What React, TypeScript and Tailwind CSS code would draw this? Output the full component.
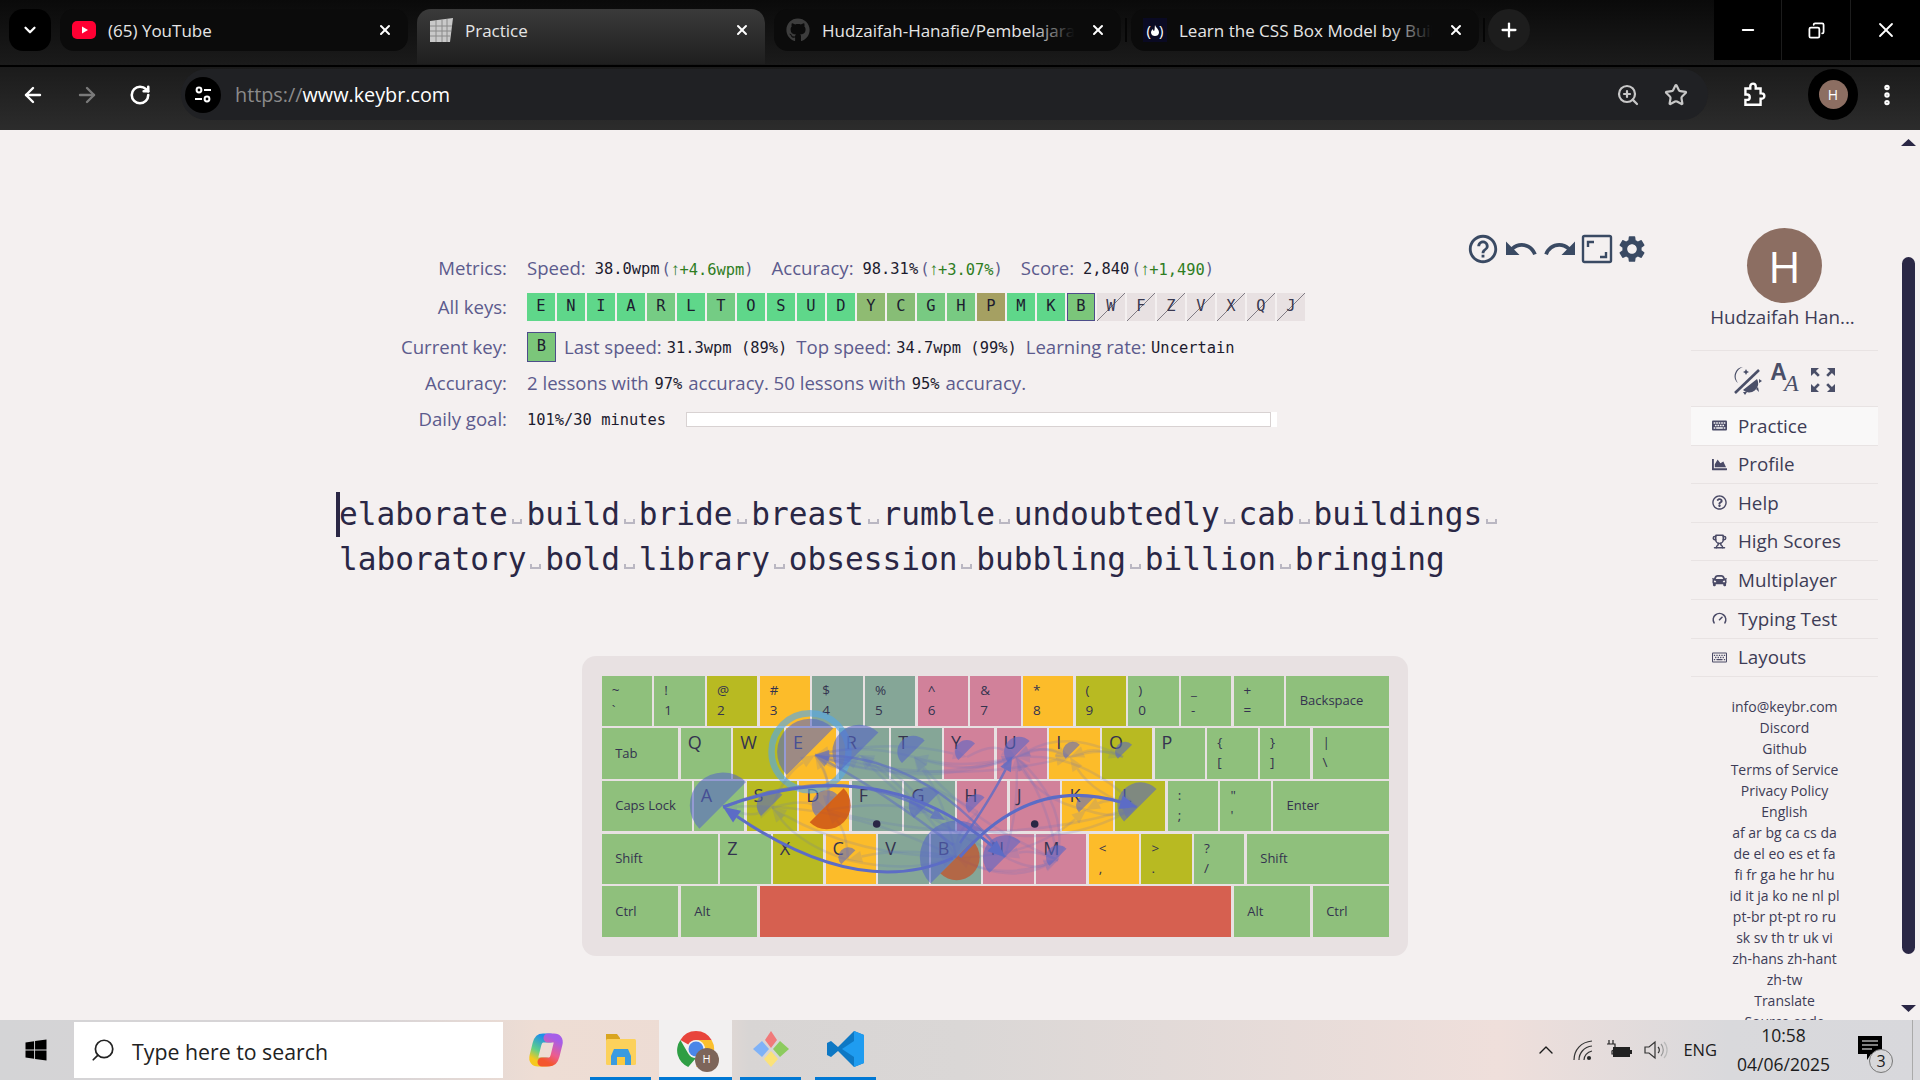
import { ChevronDown, ChevronUp, Gauge, Minus, MoreVertical, Plus, RotateCw, ArrowLeft, ArrowRight, Star, Trophy, X, ZoomIn, Search, Copy } from "lucide-react";
import { FaChartArea, FaGithub, FaKeyboard, FaRegKeyboard, FaRegQuestionCircle, FaCar, FaWindows } from "react-icons/fa";
import { MdRedo, MdSettings, MdUndo, MdZoomOutMap, MdHelpOutline } from "react-icons/md";

const sans = "font-['Open_Sans',sans-serif]";
const mono = "font-['DejaVu_Sans_Mono',monospace]";

const G = "bg-[#8fc07c]";
const O = "bg-[#b8ba22]";
const A = "bg-[#fcbc2a]";
const T = "bg-[#85a697]";
const P = "bg-[#d1819a]";

type Key = { top?: string; bot?: string; letter?: string; name?: string; w?: string; bg: string };

const U = "w-[50.33px]";

const rows: Key[][] = [
  [
    { top: "~", bot: "`", bg: G, w: U },
    { top: "!", bot: "1", bg: G, w: U },
    { top: "@", bot: "2", bg: O, w: U },
    { top: "#", bot: "3", bg: A, w: U },
    { top: "$", bot: "4", bg: T, w: U },
    { top: "%", bot: "5", bg: T, w: U },
    { top: "^", bot: "6", bg: P, w: U },
    { top: "&", bot: "7", bg: P, w: U },
    { top: "*", bot: "8", bg: A, w: U },
    { top: "(", bot: "9", bg: O, w: U },
    { top: ")", bot: "0", bg: G, w: U },
    { top: "_", bot: "-", bg: G, w: U },
    { top: "+", bot: "=", bg: G, w: U },
    { name: "Backspace", bg: G, w: "w-[103px]" },
  ],
  [
    { name: "Tab", bg: G, w: "w-[76.67px]" },
    { letter: "Q", bg: G, w: U },
    { letter: "W", bg: O, w: U },
    { letter: "E", bg: A, w: U },
    { letter: "R", bg: T, w: U },
    { letter: "T", bg: T, w: U },
    { letter: "Y", bg: P, w: U },
    { letter: "U", bg: P, w: U },
    { letter: "I", bg: A, w: U },
    { letter: "O", bg: O, w: U },
    { letter: "P", bg: G, w: U },
    { top: "{", bot: "[", bg: G, w: U },
    { top: "}", bot: "]", bg: G, w: U },
    { top: "|", bot: "\\", bg: G, w: "w-[76.67px]" },
  ],
  [
    { name: "Caps Lock", bg: G, w: "w-[89.83px]" },
    { letter: "A", bg: G, w: U },
    { letter: "S", bg: O, w: U },
    { letter: "D", bg: A, w: U },
    { letter: "F", bg: T, w: U },
    { letter: "G", bg: T, w: U },
    { letter: "H", bg: P, w: U },
    { letter: "J", bg: P, w: U },
    { letter: "K", bg: A, w: U },
    { letter: "L", bg: O, w: U },
    { top: ":", bot: ";", bg: G, w: U },
    { top: '"', bot: "'", bg: G, w: U },
    { name: "Enter", bg: G, w: "w-[116.2px]" },
  ],
  [
    { name: "Shift", bg: G, w: "w-[116.2px]" },
    { letter: "Z", bg: G, w: U },
    { letter: "X", bg: O, w: U },
    { letter: "C", bg: A, w: U },
    { letter: "V", bg: T, w: U },
    { letter: "B", bg: T, w: U },
    { letter: "N", bg: P, w: U },
    { letter: "M", bg: P, w: U },
    { top: "<", bot: ",", bg: A, w: U },
    { top: ">", bot: ".", bg: O, w: U },
    { top: "?", bot: "/", bg: G, w: U },
    { name: "Shift", bg: G, w: "w-[142.5px]" },
  ],
  [
    { name: "Ctrl", bg: G, w: "w-[76.67px]" },
    { name: "Alt", bg: G, w: "w-[76.67px]" },
    { bg: "bg-[#d66050]", w: "w-[471.7px]" },
    { name: "Alt", bg: G, w: "w-[76.67px]" },
    { name: "Ctrl", bg: G, w: "w-[76.67px]" },
  ],
];

function KeyCap({ k }: { k: Key }) {
  return (
    <div className={`${k.w} ${k.bg} h-[50.33px] shrink-0 text-[#34334f] ${sans}`}>
      {k.letter && <div className="pl-[7px] pt-[1px] text-[18px] leading-[26px]">{k.letter}</div>}
      {k.top && (
        <div className="pl-[10px] pt-[4px] text-[13.5px] leading-[20px]">
          <div>{k.top}</div>
          <div>{k.bot}</div>
        </div>
      )}
      {k.name && <div className="flex h-full items-center pl-[13.5px] text-[13px]">{k.name}</div>}
    </div>
  );
}

// fan charts and the finger-travel arrows sit on top of the keys
const R2 = 751.7;
const R3 = 805.3;
const R4 = 857.3;
const fans: [number, number, number][] = [
  [810, R2, 33], [859.3, R2, 27], [913.3, R2, 16], [966.7, R2, 11.7], [1019, R2, 15], [1072.7, R2, 10], [1125, R2, 10],
  [722.7, R3, 33], [771.7, R3, 15], [826.7, R3, 15], [926.7, R3, 18], [976.7, R3, 11], [1086, R3, 10], [1140.3, R3, 23],
  [848.3, R4, 10], [956.7, R4, 37], [1005, R4, 22], [1058, R4, 12],
];

const centers: Record<string, [number, number]> = {
  E: [815, 755], R: [860, 755], T: [914, 757], Y: [967, 757], U: [1016, 757], I: [1070, 757], O: [1123, 757],
  A: [723, 807], S: [772, 808], D: [827, 810], G: [930, 812], H: [978, 812], K: [1086, 810], L: [1137, 807],
  C: [848, 860], B: [956, 857], N: [1005, 857], M: [1058, 860],
};
const faint: [string, string, number][] = [
  ["S", "E", -12], ["D", "E", 10], ["C", "D", 10], ["C", "S", -14], ["B", "S", -25], ["B", "C", 12], ["C", "B", 14],
  ["B", "R", 14], ["B", "T", 12], ["G", "R", 12], ["N", "R", -18], ["M", "T", -20], ["H", "E", 18], ["R", "E", -8],
  ["E", "R", 20], ["T", "E", 12], ["E", "U", 34], ["U", "E", -30], ["T", "U", 18], ["U", "T", -12], ["E", "Y", -18],
  ["Y", "U", -14], ["U", "I", -12], ["I", "U", 12], ["I", "O", -8], ["O", "U", 28], ["O", "I", 10], ["K", "U", -20],
  ["L", "U", 28], ["L", "I", -16], ["L", "K", 12], ["B", "K", 26], ["K", "L", 10], ["D", "L", 44], ["G", "L", 50],
  ["M", "B", -22], ["B", "M", 26], ["N", "M", 12], ["M", "N", 10], ["E", "D", -10], ["S", "D", -10], ["D", "G", -10],
  ["A", "S", 10], ["B", "A", 30], ["N", "U", 8], ["M", "U", 12], ["U", "M", -28], ["H", "B", 10], ["E", "I", 30],
];

function Arrow({ x0, y0, cx, cy, x1, y1, op, w }: { x0: number; y0: number; cx: number; cy: number; x1: number; y1: number; op: number; w: number }) {
  const dx = x1 - cx;
  const dy = y1 - cy;
  const len = Math.hypot(dx, dy) || 1;
  const ux = dx / len;
  const uy = dy / len;
  const size = w > 2.6 ? 17 : 14;
  const bx = x1 - ux * size;
  const by = y1 - uy * size;
  const half = size * 0.42;
  return (
    <g opacity={op}>
      <path d={`M${x0} ${y0}Q${cx} ${cy} ${bx} ${by}`} fill="none" stroke="#5c6cc6" strokeWidth={w} />
      <polygon points={`${x1},${y1} ${bx - uy * half},${by + ux * half} ${bx + uy * half},${by - ux * half}`} fill="#5c6cc6" />
    </g>
  );
}

function KeyboardOverlay() {
  const half = (cx: number, cy: number, r: number, sweep: number) => {
    const d = r * 0.7071;
    return sweep
      ? `M${cx - d} ${cy + d}A${r} ${r} 0 0 1 ${cx + d} ${cy - d}Z`
      : `M${cx - d} ${cy + d}A${r} ${r} 0 0 0 ${cx + d} ${cy - d}Z`;
  };
  return (
    <svg className="absolute left-0 top-0 h-[300px] w-[826px]" viewBox="582 656 826 300">
      <circle cx="810" cy="751.7" r="38.5" fill="none" stroke="#58a8e4" strokeWidth="6.5" opacity="0.65" />
      {faint.map(([a, b, bend], i) => {
        const [x0, y0] = centers[a];
        const [x1, y1] = centers[b];
        const mx = (x0 + x1) / 2;
        const my = (y0 + y1) / 2;
        const l = Math.hypot(x1 - x0, y1 - y0) || 1;
        return (
          <Arrow key={i} x0={x0} y0={y0} x1={x1} y1={y1} cx={mx - ((y1 - y0) / l) * bend} cy={my + ((x1 - x0) / l) * bend} op={0.17} w={2.5} />
        );
      })}
      {fans.map(([x, y, r], i) => (
        <path key={i} d={half(x, y, r, 1)} fill="#5564c8" opacity="0.57" />
      ))}
      <path d={half(826.7, R3, 24, 0)} fill="#c84a14" opacity="0.78" />
      <path d={half(956.7, R4, 23, 0)} fill="#c84a20" opacity="0.68" />
      <Arrow x0={1005} y0={857} cx={930} cy={760} x1={815} y1={755} op={0.62} w={2.5} />
      <Arrow x0={953} y0={845} cx={880} cy={790} x1={815} y1={755} op={0.5} w={2.5} />
      <Arrow x0={960} y0={843} cx={990} cy={800} x1={1012} y1={757} op={0.8} w={2.5} />
      <Arrow x0={723} y0={807} cx={840} cy={760} x1={945} y1={820} op={0.7} w={2.5} />
      <Arrow x0={953} y0={858} cx={860} cy={900} x1={723} y1={807} op={1} w={3} />
      <Arrow x0={723} y0={807} cx={880} cy={750} x1={1005} y1={857} op={1} w={3} />
      <Arrow x0={960} y0={857} cx={1030} cy={775} x1={1137} y1={807} op={1} w={3} />
      <circle cx="876.7" cy="824" r="3.8" fill="#2a2745" />
      <circle cx="1034.7" cy="824" r="3.8" fill="#2a2745" />
    </svg>
  );
}

// top bar of the stats block
const allKeys: [string, string][] = [
  ["E", "bg-[#5fd78a]"], ["N", "bg-[#5fd78a]"], ["I", "bg-[#5fd78a]"], ["A", "bg-[#5fd78a]"], ["R", "bg-[#76cc84]"],
  ["L", "bg-[#5fd78a]"], ["T", "bg-[#74cc84]"], ["O", "bg-[#5fd78a]"], ["S", "bg-[#5fd78a]"], ["U", "bg-[#5fd78a]"],
  ["D", "bg-[#5fd78a]"], ["Y", "bg-[#8fbb72]"], ["C", "bg-[#87bd76]"], ["G", "bg-[#78ca82]"], ["H", "bg-[#78ca82]"],
  ["P", "bg-[#a5a062]"], ["M", "bg-[#5fd78a]"], ["K", "bg-[#5fd78a]"],
];
const locked = ["W", "F", "Z", "V", "X", "Q", "J"];

function StatRow({ label, h, children }: { label: string; h: string; children: React.ReactNode }) {
  return (
    <div className={`flex ${h} items-center`}>
      <div className="w-[180px] shrink-0 text-right text-[#5c5b8d]">{label}</div>
      <div className="ml-[20px] flex items-center whitespace-pre text-[#5c5b8d]">{children}</div>
    </div>
  );
}

const V = ({ children, cls = "" }: { children: React.ReactNode; cls?: string }) => (
  <span className={`relative top-[2px] ${mono} text-[15.4px] text-[#1c1b2e] ${cls}`}>{children}</span>
);
const Up = ({ children }: { children: React.ReactNode }) => (
  <span className={`relative top-[2px] ${mono} text-[15.4px] text-[#2f7d1f]`}>
    <span className="font-['Liberation_Sans',sans-serif] text-[17px]">↑</span>
    {children}
  </span>
);

function Stats() {
  return (
    <div className={`pt-[120px] text-[18.6px] ${sans}`}>
      <StatRow label="Metrics:" h="h-[36px]">
        <span>Speed:</span>
        <V cls="ml-[9px]">38.0wpm</V>
        <V cls="ml-[2px] text-[#5c5b8d]">(</V>
        <Up>+4.6wpm</Up>
        <V cls="text-[#5c5b8d]">)</V>
        <span className="ml-[18px]">Accuracy:</span>
        <V cls="ml-[9px]">98.31%</V>
        <V cls="ml-[2px] text-[#5c5b8d]">(</V>
        <Up>+3.07%</Up>
        <V cls="text-[#5c5b8d]">)</V>
        <span className="ml-[18px]">Score:</span>
        <V cls="ml-[9px]">2,840</V>
        <V cls="ml-[2px] text-[#5c5b8d]">(</V>
        <Up>+1,490</Up>
        <V cls="text-[#5c5b8d]">)</V>
      </StatRow>
      <StatRow label="All keys:" h="h-[41px]">
        <div className="flex gap-[2px]">
          {allKeys.map(([l, c]) => (
            <div key={l} className={`flex h-[28px] w-[28px] items-center justify-center ${c} ${mono} text-[15.4px] text-[#1c1b2e]`}>{l}</div>
          ))}
          <div className={`flex h-[28px] w-[28px] items-center justify-center border border-[#4d4d8a] bg-[#7bc67a] ${mono} text-[15.4px] text-[#1c1b2e]`}>B</div>
          {locked.map((l) => (
            <div
              key={l}
              className={`flex h-[28px] w-[28px] items-center justify-center bg-[#e8e1e2] bg-[linear-gradient(to_bottom_right,transparent_49%,#807c84_49%,#807c84_51.5%,transparent_51.5%)] ${mono} text-[15.4px] text-[#3a3950]`}
            >
              {l}
            </div>
          ))}
        </div>
      </StatRow>
      <StatRow label="Current key:" h="h-[39px]">
        <div className={`flex h-[30px] w-[29px] items-center justify-center border border-[#4d4d8a] bg-[#7bc67a] ${mono} text-[15.4px] text-[#1c1b2e]`}>B</div>
        <span className="ml-[8px]">Last speed:</span>
        <V cls="ml-[5px]">31.3wpm (89%)</V>
        <span className="ml-[9px]">Top speed:</span>
        <V cls="ml-[5px]">34.7wpm (99%)</V>
        <span className="ml-[9px]">Learning rate:</span>
        <V cls="ml-[5px]">Uncertain</V>
      </StatRow>
      <StatRow label="Accuracy:" h="h-[33px]">
        <span>2 lessons with </span>
        <V cls="mx-[1px]">97%</V>
        <span> accuracy. 50 lessons with </span>
        <V cls="mx-[1px]">95%</V>
        <span> accuracy.</span>
      </StatRow>
      <StatRow label="Daily goal:" h="h-[39px]">
        <V>101%/30 minutes</V>
        <div className="relative top-[1px] ml-[20px] flex h-[15px] w-[591px] bg-white">
          <div className="h-full w-[585px] border border-[#d8d2d2]" />
        </div>
      </StatRow>
    </div>
  );
}

function TopTools() {
  return (
    <div className="flex items-center gap-[3px] pt-[101px] text-[#3a4a63]">
      <MdHelpOutline className="h-[34px] w-[34px]" />
      <MdUndo className="h-[36px] w-[36px]" />
      <MdRedo className="h-[36px] w-[36px]" />
      <svg className="h-[32px] w-[32px]" viewBox="0 0 32 32" fill="none" stroke="currentColor" strokeWidth="2.4">
        <rect x="2" y="3" width="28" height="26" rx="1.5" />
        <path d="M7 14V9h6M25 19v5h-6" />
      </svg>
      <MdSettings className="h-[32px] w-[32px]" />
    </div>
  );
}

const SpaceMark = () => (
  <span className="inline-block h-[6px] w-[18.75px] px-[4px] align-baseline">
    <span className="block h-[5px] border-x-2 border-b-2 border-[#bab7c2]" />
  </span>
);

function Line({ words }: { words: string[] }) {
  return (
    <div className={`whitespace-pre text-[31.14px] leading-[45px] text-[#2a2745] ${mono}`}>
      {words.map((w, i) => (
        <span key={i}>
          {w}
          {(i < words.length - 1 || words[0] === "elaborate") && <SpaceMark />}
        </span>
      ))}
    </div>
  );
}

function Practice() {
  return (
    <div className="relative ml-[339px] mt-[54px]">
      <div className="absolute left-[-3px] top-[0px] h-[45px] w-[4px] bg-[#2a2745]" />
      <Line words={["elaborate", "build", "bride", "breast", "rumble", "undoubtedly", "cab", "buildings"]} />
      <Line words={["laboratory", "bold", "library", "obsession", "bubbling", "billion", "bringing"]} />
    </div>
  );
}

function Keyboard() {
  return (
    <div className="relative ml-[582px] mt-[74px] flex h-[300px] w-[826px] flex-col gap-[2.33px] rounded-[14px] bg-[#e8e1e2] pl-[19.7px] pt-[19.7px]">
      {rows.map((r, i) => (
        <div key={i} className="flex gap-[2.33px]">
          {r.map((k, j) => (
            <KeyCap key={j} k={k} />
          ))}
        </div>
      ))}
      <KeyboardOverlay />
    </div>
  );
}

const GaugeIcon = ({ className }: { className?: string }) => <Gauge className={className} strokeWidth={2.6} />;
const TrophyIcon = ({ className }: { className?: string }) => <Trophy className={className} strokeWidth={2.4} />;

const menu = [
  { label: "Practice", Icon: FaKeyboard, active: true },
  { label: "Profile", Icon: FaChartArea },
  { label: "Help", Icon: FaRegQuestionCircle },
  { label: "High Scores", Icon: TrophyIcon },
  { label: "Multiplayer", Icon: FaCar },
  { label: "Typing Test", Icon: GaugeIcon },
  { label: "Layouts", Icon: FaRegKeyboard },
];
const footer = [
  "info@keybr.com", "Discord", "Github", "Terms of Service", "Privacy Policy", "English",
  "af ar bg ca cs da", "de el eo es et fa", "fi fr ga he hr hu", "id it ja ko ne nl pl",
  "pt-br pt-pt ro ru", "sk sv th tr uk vi", "zh-hans zh-hant", "zh-tw", "Translate", "Source code",
];

function Sidebar() {
  return (
    <aside className={`flex w-[187px] shrink-0 flex-col pt-[98px] text-[#3d3c56] ${sans}`}>
      <div className="mx-auto flex h-[75px] w-[75px] shrink-0 items-center justify-center rounded-full bg-[#8c6e62] text-[44px] text-white">H</div>
      <div className="shrink-0 pr-[4px] text-center text-[18.8px] leading-[28px]">Hudzaifah Han...</div>
      <div className="mt-[19px] flex h-[57px] shrink-0 items-center justify-center border-y border-[#e8e3e3] pt-[3px] text-[#4a4f68]">
        <div className="flex w-[38px] justify-center">
          <svg className="h-[30px] w-[30px]" viewBox="0 0 30 30" fill="currentColor">
            <path d="M11 2a10 10 0 0 0-5 16 9 9 0 0 1 5-16Z" />
            <path d="M14 4l1 2 2 1-2 1-1 2-1-2-2-1 2-1Z" />
            <path d="M3 28 27 5" stroke="currentColor" strokeWidth="2.6" />
            <path d="M11 25a9 9 0 0 0 14-11Z" />
            <path d="M27 14l3 2-3 2zM11 27l2 3 2-3zM24 24l3 3-1-5z" />
          </svg>
        </div>
        <div className="flex w-[38px] justify-center">
          <span className="-mt-[5px] font-['Liberation_Sans',sans-serif] text-[23px] font-bold leading-none">A</span>
          <span className="-ml-[3px] mt-[5px] font-['Liberation_Serif',serif] text-[24px] italic leading-none">A</span>
        </div>
        <div className="flex w-[38px] justify-center">
          <MdZoomOutMap className="h-[32px] w-[32px]" />
        </div>
      </div>
      {menu.map(({ label, Icon, active }) => (
        <div key={label} className={`flex h-[38.6px] shrink-0 items-center border-b border-[#e8e3e3] pl-[21px] text-[18.8px] ${active ? "bg-[#f9f8f8]" : ""}`}>
          <Icon className="h-[15px] w-[15px] text-[#4a4a66]" />
          <span className="ml-[11px]">{label}</span>
        </div>
      ))}
      <div className="shrink-0 pt-[19px] text-center text-[14px] leading-[21px]">
        {footer.map((f) => (
          <div key={f}>{f}</div>
        ))}
      </div>
    </aside>
  );
}

function Scrollbar() {
  return (
    <div className="ml-[22px] flex w-[16px] shrink-0 flex-col items-center pt-[9px] text-[#2a2745]">
      <svg className="h-[7px] w-[15px] shrink-0" viewBox="0 0 15 7" fill="currentColor"><path d="M7.5 0 15 7H0Z" /></svg>
      <div className="mt-[111px] h-[697px] w-[13px] shrink-0 rounded-full bg-[#2a2745]" />
      <svg className="mt-[51px] h-[7px] w-[15px] shrink-0" viewBox="0 0 15 7" fill="currentColor"><path d="M0 0h15L7.5 7Z" /></svg>
    </div>
  );
}

// browser chrome
const FavYT = () => (
  <svg className="h-[24px] w-[24px] shrink-0" viewBox="0 0 24 24">
    <rect y="3" width="24" height="18" rx="5" fill="#ff0033" />
    <path d="M10 8.5v7l6-3.5Z" fill="#fff" />
  </svg>
);
const FavKeybr = () => (
  <svg className="h-[24px] w-[24px] shrink-0" viewBox="0 0 24 24">
    <path d="M1 3 24 0l-3 24H1Z" fill="#c9c9c9" />
    <path d="M1 8h22M1 13h21M1 18h20M7 2v22M13 2v22M18 1v23" stroke="#8a8a8a" strokeWidth="1" />
  </svg>
);
const FavFcc = () => (
  <div className={`flex h-[24px] w-[24px] shrink-0 items-center justify-center bg-[#0a0a23] text-[15px] leading-none text-white ${sans}`}>
    (<svg className="h-[11px] w-[8px]" viewBox="0 0 8 11" fill="#fff"><path d="M4 0c1 3 4 4 4 7.500C8 10 6 11 4 11S0 10 0 7.500C0 6 1 5 2 4c0 1 .5 2 1 2C4 5 3.500 2 4 0Z" /></svg>)
  </div>
);

function Tab({ w, title, fav, active, fade }: { w: string; title: string; fav: React.ReactNode; active?: boolean; fade?: boolean }) {
  return (
    <div className={`relative flex ${w} shrink-0 items-center pl-[12px] pr-[15px] ${active ? "h-[55px] self-start rounded-t-[14px] bg-[linear-gradient(#3a3a3a,#1f1f1f)] pb-[13px]" : "h-[42px] rounded-[14px] bg-[#0b0b0b]"}`}>
      {fav}
      <span className="relative ml-[12px] min-w-0 flex-1 overflow-hidden whitespace-nowrap pt-[2px] text-[17px] text-[#e6e6e6]">
        {title}
        {fade && <span className="absolute right-0 top-0 h-full w-[50px] bg-[linear-gradient(90deg,transparent,#0b0b0b_85%)]" />}
      </span>
      <X className="ml-[8px] h-[16px] w-[16px] shrink-0 text-white" strokeWidth={3} />
    </div>
  );
}

function TabStrip() {
  return (
    <div className={`flex h-[65px] items-start bg-[linear-gradient(#0a0a0a,#1b1b1b)] pt-[9px] ${sans}`}>
      <div className="ml-[9px] flex h-[42px] w-[42px] items-center justify-center rounded-[14px] bg-black">
        <ChevronDown className="h-[18px] w-[18px] text-white" strokeWidth={3} />
      </div>
      <div className="ml-[9px] flex gap-[9px]">
        <Tab w="w-[348px]" title="(65) YouTube" fav={<FavYT />} />
        <Tab w="w-[348px]" title="Practice" fav={<FavKeybr />} active />
        <Tab w="w-[347px]" title="Hudzaifah-Hanafie/Pembelajaran-Web" fav={<FaGithub className="h-[24px] w-[24px] shrink-0 text-[#3d3d3d]" />} fade />
        <div className="-mx-[5px] mt-[9px] h-[24px] w-[2px] bg-[#050505]" />
        <Tab w="w-[348px]" title="Learn the CSS Box Model by Building a Rothko" fav={<FavFcc />} fade />
        <div className="-mx-[5px] mt-[9px] h-[24px] w-[2px] bg-[#050505]" />
      </div>
      <div className="ml-[8px] flex h-[42px] w-[42px] items-center justify-center rounded-full bg-[#1d1d1d]">
        <Plus className="h-[22px] w-[22px] text-white" strokeWidth={2.5} />
      </div>
      <div className="-mt-[9px] ml-auto flex h-[60px] w-[206px] bg-black text-white">
        <div className="flex w-[68px] items-center justify-center border-r border-[#1c1c1c]"><Minus className="h-[18px] w-[18px]" strokeWidth={2.5} /></div>
        <div className="flex w-[69px] items-center justify-center border-r border-[#1c1c1c]"><Copy className="h-[17px] w-[17px] -scale-x-100" strokeWidth={2.5} /></div>
        <div className="flex w-[69px] items-center justify-center"><X className="h-[24px] w-[24px]" strokeWidth={1.8} /></div>
      </div>
    </div>
  );
}

function Toolbar() {
  return (
    <div className={`flex h-[65px] items-start border-t-2 border-black bg-[linear-gradient(#1b1b1b,#2c2c2c)] pt-[2px] text-white ${sans}`}>
      <ArrowLeft className="ml-[21px] mt-[14px] h-[24px] w-[24px]" strokeWidth={2.4} />
      <ArrowRight className="ml-[30px] mt-[14px] h-[24px] w-[24px] text-[#7a7a7a]" strokeWidth={2.4} />
      <RotateCw className="ml-[30px] mt-[15px] h-[22px] w-[22px]" strokeWidth={2.8} />
      <div className="ml-[30px] flex h-[51px] w-[1527px] items-center rounded-full bg-[#202124] pl-[4px] pr-[20px]">
        <div className="flex h-[36px] w-[36px] items-center justify-center rounded-full bg-black">
          <svg className="h-[20px] w-[20px]" viewBox="0 0 20 20" fill="none" stroke="#fff" strokeWidth="2">
            <circle cx="6" cy="5" r="2.4" /><path d="M11 5h7M2 14h7" /><circle cx="14" cy="14" r="2.4" />
          </svg>
        </div>
        <span className="ml-[14px] text-[19.8px] text-[#8b8b8b]">https://</span>
        <span className="text-[19.8px] text-white">www.keybr.com</span>
        <ZoomIn className="ml-auto h-[24px] w-[24px] text-[#c7c7c7]" strokeWidth={2.2} />
        <Star className="ml-[24px] h-[24px] w-[24px] text-[#c7c7c7]" strokeWidth={2.2} />
      </div>
      <svg className="ml-[32px] mt-[13px] h-[26px] w-[26px]" viewBox="0 0 24 24" fill="none" stroke="#fff" strokeWidth="2.2">
        <path d="M5 6h4.500V4a2.500 2.500 0 0 1 5 0v2H19v4.500h1a2.500 2.500 0 0 1 0 5h-1V21H5v-4.500h1.500a2.500 2.500 0 0 0 0-5H5Z" />
      </svg>
      <div className="ml-[42px] flex h-[51px] w-[50px] items-center justify-center rounded-full bg-black">
        <div className="flex h-[29px] w-[29px] items-center justify-center rounded-full bg-[#8c6e62] text-[14px] text-white">H</div>
      </div>
      <MoreVertical className="ml-[16px] mt-[13px] h-[26px] w-[26px]" strokeWidth={3} />
    </div>
  );
}

// taskbar
const Copilot = () => (
  <svg className="h-[36px] w-[36px]" viewBox="0 0 36 36" fill="none" strokeWidth="9" strokeLinecap="round">
    <defs>
      <linearGradient id="cp1" x1="0.7" y1="0" x2="0.3" y2="1"><stop offset="0" stopColor="#1f8fe8" /><stop offset="0.6" stopColor="#5fcf8a" /><stop offset="1" stopColor="#f6c81e" /></linearGradient>
      <linearGradient id="cp2" x1="0.7" y1="0" x2="0.3" y2="1"><stop offset="0" stopColor="#a65ee8" /><stop offset="0.6" stopColor="#ec5d8f" /><stop offset="1" stopColor="#f4562d" /></linearGradient>
    </defs>
    <path d="M22 6h-7c-3 0-5 2-6 6l-3 12c-1 4 1 6 4 6h8" stroke="url(#cp1)" />
    <path d="M14 30h7c3 0 5-2 6-6l3-12c1-4-1-6-4-6h-6" stroke="url(#cp2)" />
  </svg>
);
const Folder = () => (
  <svg className="h-[36px] w-[36px]" viewBox="0 0 36 36">
    <path d="M3 3h11l3 4v3H3Z" fill="#d9a520" />
    <rect x="3" y="8" width="30" height="26" rx="1.500" fill="#fcd15b" />
    <path d="M11 18h14l3 7v9H8v-9Z" fill="#3a9be0" />
    <rect x="14" y="26" width="8" height="8" fill="#fbc93f" />
  </svg>
);
const ChromeIcon = () => (
  <div className="relative h-[38px] w-[38px]">
    <svg className="h-[38px] w-[38px]" viewBox="0 0 38 38">
      <path d="M19 1a18 18 0 0 1 15.600 9H19a9 9 0 0 0-7.800 4.500L3.400 10A18 18 0 0 1 19 1Z" fill="#e8453c" />
      <path d="M3.400 10 11.200 23.500A9 9 0 0 0 19 28l-7.800 9A18 18 0 0 1 3.400 10Z" fill="#2f9e44" />
      <path d="M34.600 10A18 18 0 0 1 19 37l7.800-13.500A9 9 0 0 0 19 10Z" fill="#fbc02d" />
      <circle cx="19" cy="19" r="7.500" fill="#4a86e8" />
    </svg>
    <div className="absolute bottom-[-4px] right-[-4px] flex h-[24px] w-[24px] items-center justify-center rounded-full bg-[#7d655a] text-[11px] text-white">H</div>
  </div>
);
const Kraken = () => (
  <svg className="h-[36px] w-[36px]" viewBox="0 0 36 36">
    <path d="M18 0l6 9-6 8-6-8Z" fill="#f07a7a" />
    <path d="M9 10l7 8-7 8-9-8Z" fill="#7fb2f7" />
    <path d="M27 10l9 8-9 8-7-8Z" fill="#8ccb5e" />
    <path d="M18 20l7 8-7 8-7-8Z" fill="#fbe27a" />
  </svg>
);
const Code = () => (
  <svg className="h-[40px] w-[40px]" viewBox="0 0 40 40">
    <path d="M28 2 12 18 5 12 1 14v12l4 2 7-6 16 16 10-4V6Z" fill="#0e78c4" />
    <path d="M28 2l10 4v28l-10 4V12L16 20l12 8Z" fill="#1f9cf0" />
  </svg>
);

function Taskbar() {
  return (
    <div className={`flex h-[60px] items-stretch bg-[linear-gradient(90deg,#d4d4d6_0%,#d8d4d6_20%,#eeddd4_28%,#eddcd4_36%,#d8d5d4_39%,#dad7d6_50%,#efdfdb_78%,#d9d9dc_90%,#d8d8dc_100%)] ${sans}`}>
      <div className="flex w-[72px] shrink-0 items-center justify-center pr-[1px]">
        <FaWindows className="h-[24px] w-[24px] text-black" />
      </div>
      <div className="my-[2px] ml-[2px] flex w-[429px] shrink-0 items-center bg-white pl-[16px]">
        <Search className="h-[26px] w-[26px] -scale-x-100 text-[#222]" strokeWidth={1.6} />
        <span className="ml-[16px] pt-[3px] text-[21.3px] text-[#222]">Type here to search</span>
      </div>
      <div className="ml-[8px] flex w-[70px] items-center justify-center"><Copilot /></div>
      <div className="ml-[9px] flex w-[61px] items-center justify-center border-b-[3px] border-[#0078d4]"><Folder /></div>
      <div className="ml-[8px] flex w-[73px] items-center justify-center border-b-[3px] border-[#0078d4] bg-[#f2f0f0]"><ChromeIcon /></div>
      <div className="ml-[8px] flex w-[61px] items-center justify-center border-b-[3px] border-[#0078d4]"><Kraken /></div>
      <div className="ml-[14px] flex w-[61px] items-center justify-center border-b-[3px] border-[#0078d4]"><Code /></div>
      <div className="ml-auto flex items-center text-[#1c1c1c]">
        <ChevronUp className="h-[24px] w-[24px]" strokeWidth={1.4} />
        <svg className="ml-[14px] h-[22px] w-[22px]" viewBox="0 0 22 22" fill="none" stroke="#333" strokeWidth="1.200">
          <path d="M2 21C2 11 9 3 20 2M7 21c0-7 5-13 13-14M12 21c0-4 3-8 8-9" /><circle cx="17" cy="19" r="1.500" fill="#222" />
        </svg>
        <svg className="ml-[13px] h-[22px] w-[26px]" viewBox="0 0 26 22">
          <path d="M2 1v4M6 1v4M0 5h8v3a4 4 0 0 1-3 4v3h4" fill="none" stroke="#222" strokeWidth="1.200" />
          <rect x="6" y="8" width="17" height="10" fill="#222" />
          <rect x="23" y="11" width="2" height="4" fill="#222" />
        </svg>
        <svg className="ml-[11px] h-[22px] w-[24px]" viewBox="0 0 24 22" fill="none" stroke="#333" strokeWidth="1.200">
          <path d="M1 8v6h4l6 5V3L5 8Z" /><path d="M14 8a4 4 0 0 1 0 6" /><path d="M17 5a9 9 0 0 1 0 12" stroke="#999" /><path d="M20 3a12 12 0 0 1 0 16" stroke="#bbb" />
        </svg>
        <span className="ml-[15px] text-[16.5px]">ENG</span>
        <div className="ml-[20px] flex w-[93px] flex-col items-center text-[17.5px] leading-[29px]">
          <span>10:58</span>
          <span>04/06/2025</span>
        </div>
        <div className="relative ml-[28px] mr-[30px] h-[28px] w-[24px]">
          <svg className="h-[26px] w-[24px]" viewBox="0 0 24 26">
            <path d="M0 0h24v18H13l-4 6v-6H0Z" fill="#000" />
            <path d="M4 5h16M4 9h16M4 13h10" stroke="#fff" strokeWidth="1.200" />
          </svg>
          <div className="absolute left-[11px] top-[13px] flex h-[24px] w-[24px] items-center justify-center rounded-full border border-[#777] bg-[#d8d8da] text-[16px]">3</div>
        </div>
        <div className="h-full w-[1px] bg-[#aaaaaa]" />
        <div className="w-[7px]" />
      </div>
    </div>
  );
}

export default function App() {
  return (
    <div className="flex h-[1080px] w-[1920px] flex-col overflow-hidden bg-[#f4f0f0]">
      <TabStrip />
      <Toolbar />
      <div className="flex h-[890px] shrink-0 overflow-hidden">
        <main className="w-[1691px] shrink-0">
          <div className="flex pl-[327px]">
            <Stats />
            <div className="ml-auto mr-[43px]">
              <TopTools />
            </div>
          </div>
          <Practice />
          <Keyboard />
        </main>
        <Sidebar />
        <Scrollbar />
      </div>
      <Taskbar />
    </div>
  );
}
